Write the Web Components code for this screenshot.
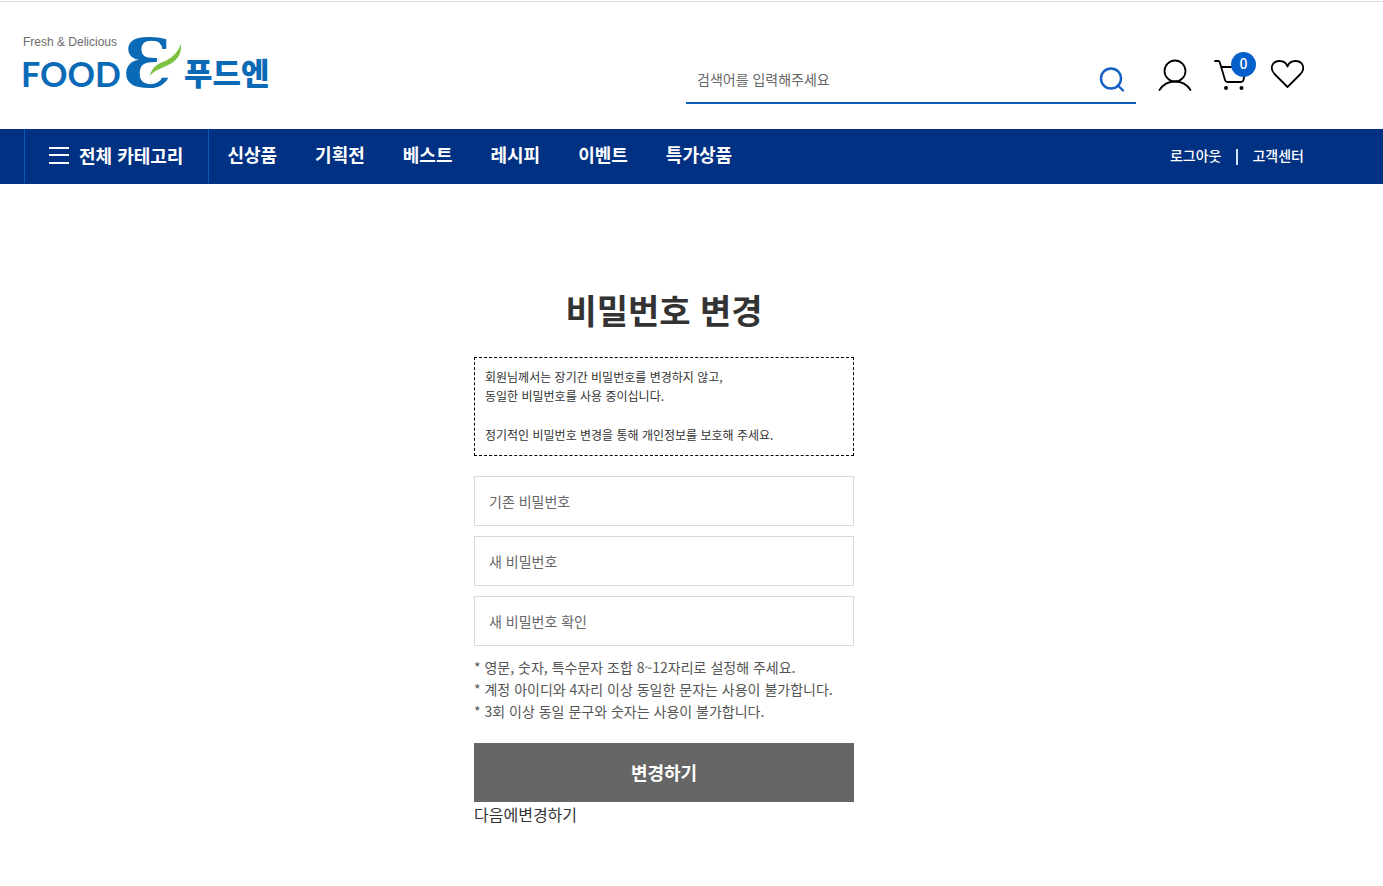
<!DOCTYPE html>
<html lang="ko">
<head>
  <meta charset="utf-8">
  <meta name="viewport" content="width=device-width, initial-scale=1">
  <title>비밀번호 변경</title>
  <style>
    body {
      margin: 0;
      background: #fff;
      color: #333;
      font-family: "Noto Sans CJK KR", "Noto Sans", sans-serif;
      font-size: 14px;
      --blue: #0d5bb8;
      --navy: #003182;
      --side-left: 24px;
      --side-right: 79px;
    }
  </style>
</head>
<body>

  <site-header></site-header>

  <site-nav>
    <a href="#new">신상품</a>
    <a href="#plan">기획전</a>
    <a href="#best">베스트</a>
    <a href="#recipe">레시피</a>
    <a href="#event">이벤트</a>
    <a href="#special">특가상품</a>
    <a slot="util" href="#logout">로그아웃</a>
    <a slot="util" href="#cs">고객센터</a>
  </site-nav>

  <password-page>
    <notice-box>
      <p>회원님께서는 장기간 비밀번호를 변경하지 않고,<br>동일한 비밀번호를 사용 중이십니다.</p>
      <p>정기적인 비밀번호 변경을 통해 개인정보를 보호해 주세요.</p>
    </notice-box>
    <password-field name="old" label="기존 비밀번호"></password-field>
    <password-field name="new" label="새 비밀번호"></password-field>
    <password-field name="confirm" label="새 비밀번호 확인"></password-field>
  </password-page>

  <script>
    class SiteLogo extends HTMLElement {
      constructor() {
        super();
        this.attachShadow({ mode: 'open' });
      }

      connectedCallback() {
        this.shadowRoot.innerHTML = `
          <style>
            :host {
              display: block;
            }

            a, svg {
              display: block;
            }

            svg {
              overflow: visible;
            }

            .blue {
              fill: #0a6ab6;
            }

            .slogan {
              font: 12px "Liberation Sans", sans-serif;
              fill: #6b6b6b;
            }

            .food {
              font: bold 34px Lato, sans-serif;
            }

            .amp {
              font: bold 68px "DejaVu Serif", serif;
            }

            .kor {
              font: 900 31px "Noto Sans CJK KR", sans-serif;
            }
          </style>
          <a href="#home" aria-label="푸드엔">
            <svg width="250" height="60" viewBox="0 0 250 60">
              <text class="slogan" x="-1" y="13">Fresh &amp; Delicious</text>
              <text class="blue food" x="-3" y="54">FOOD</text>
              <text class="blue amp" x="99" y="54">Ɛ</text>
              <path d="M125 44C127 35 132 31 140 28C149 24 154 19 157 9C159 19 155 26 147 31C138 36 131 37 125 44Z" fill="#7cc142" stroke="#fff" stroke-width="1"/>
              <text class="blue kor" x="160" y="52">푸드엔</text>
            </svg>
          </a>
        `;
      }
    }

    class SiteHeader extends HTMLElement {
      constructor() {
        super();
        this.attachShadow({ mode: 'open' });
      }

      connectedCallback() {
        this.shadowRoot.innerHTML = `
          <style>
            :host {
              display: block;
              margin-top: 1px;
              border-top: 1px solid #ddd;
            }

            .inner {
              display: flex;
              align-items: flex-start;
              height: 127px;
              box-sizing: border-box;
              padding: 31px var(--side-right) 0 var(--side-left);
            }

            .search {
              display: flex;
              align-items: center;
              flex: 0 1 450px;
              height: 48px;
              box-sizing: border-box;
              margin: 23px 22px 0 auto;
              border-bottom: 2px solid var(--blue);
            }

            .search input {
              flex: 1;
              min-width: 0;
              padding: 0 11px;
              border: 0;
              outline: 0;
              background: none;
              font: inherit;
              color: #333;
            }

            .search input::placeholder {
              color: #666;
              opacity: 1;
            }

            button {
              padding: 0 11px 0 0;
              border: 0;
              background: none;
              cursor: pointer;
            }

            svg {
              display: block;
              fill: none;
              stroke: #000;
              stroke-width: 1.8;
              stroke-linecap: round;
              stroke-linejoin: round;
            }

            .search svg {
              stroke: #1560c4;
              stroke-width: 2.4;
            }

            .icons {
              display: flex;
              gap: 22px;
              margin-top: 24px;
            }

            .icons a {
              position: relative;
            }

            .count {
              position: absolute;
              top: -5px;
              right: -8px;
              width: 25px;
              height: 25px;
              border-radius: 50%;
              background: #0660cc;
              color: #fff;
              font-weight: 500;
              line-height: 23px;
              text-align: center;
            }
          </style>
          <div class="inner">
            <site-logo></site-logo>
            <form class="search">
              <input type="text" placeholder="검색어를 입력해주세요" aria-label="검색어">
              <button type="button" aria-label="검색">
                <svg width="26" height="26" viewBox="0 0 26 26">
                  <circle cx="12" cy="12.5" r="10"/>
                  <path d="M19 19.5L24 24.5"/>
                </svg>
              </button>
            </form>
            <div class="icons">
              <a href="#my" aria-label="마이페이지">
                <svg width="34" height="36" viewBox="0 0 34 36">
                  <circle cx="17" cy="14" r="10.5"/>
                  <path d="M1.500 33C5 27.500 10 24.500 17 24.500S29 27.500 32.500 33"/>
                </svg>
              </a>
              <a href="#cart" aria-label="장바구니">
                <svg width="34" height="36" viewBox="0 0 34 36">
                  <path d="M1 4H4.500Q5.500 4 6 6L11 23Q11.500 25 13.500 25H27Q29 25 29.500 23L32 10H7"/>
                  <circle cx="12" cy="31" r="2" fill="#000" stroke="none"/>
                  <circle cx="27.500" cy="31" r="2" fill="#000" stroke="none"/>
                </svg>
                <span class="count">0</span>
              </a>
              <a href="#wish" aria-label="찜">
                <svg width="34" height="36" viewBox="0 0 34 36">
                  <path d="M17.500 30L4.500 17C-1 11 2.500 4 9.500 4C13.500 4 16.500 6.500 17.500 9.500C18.500 6.500 21.500 4 25.500 4C32.500 4 36 11 30.500 17Z"/>
                </svg>
              </a>
            </div>
          </div>
        `;
      }
    }

    class SiteNav extends HTMLElement {
      constructor() {
        super();
        this.attachShadow({ mode: 'open' });
      }

      connectedCallback() {
        this.shadowRoot.innerHTML = `
          <style>
            :host {
              display: block;
              background: var(--navy);
              color: #fff;
            }

            nav {
              display: flex;
              align-items: center;
              height: 55px;
              padding: 0 var(--side-right) 0 var(--side-left);
            }

            .all {
              display: flex;
              align-items: center;
              gap: 10px;
              height: 54px;
              align-self: flex-start;
              padding: 0 25px 2px 24px;
              border: solid #0e58b4;
              border-width: 0 1px;
              background: none;
              color: #fff;
              font: bold 18px "Noto Sans CJK KR", sans-serif;
              cursor: pointer;
            }

            .bars {
              box-sizing: border-box;
              width: 20px;
              height: 17px;
              border: solid #fff;
              border-width: 2px 0;
              background: linear-gradient(#fff, #fff) center / 100% 2px no-repeat;
            }

            .menu {
              display: flex;
              gap: 38px;
              padding-left: 18px;
              font-size: 18px;
              font-weight: bold;
              line-height: 50px;
              align-self: flex-start;
            }

            .util {
              display: flex;
              gap: 31px;
              margin-left: auto;
              padding-bottom: 3px;
              font-weight: 500;
              position: relative;
            }

            .util::before {
              content: "";
              position: absolute;
              top: 4px;
              left: 50%;
              width: 2px;
              height: 16px;
              margin-left: -1px;
              background: #cfe4ff;
            }

            ::slotted(a) {
              color: inherit;
              text-decoration: none;
              white-space: nowrap;
            }
          </style>
          <nav>
            <button class="all" type="button"><span class="bars"></span>전체 카테고리</button>
            <div class="menu"><slot></slot></div>
            <div class="util"><slot name="util"></slot></div>
          </nav>
        `;
      }
    }

    class NoticeBox extends HTMLElement {
      constructor() {
        super();
        this.attachShadow({ mode: 'open' });
      }

      connectedCallback() {
        this.shadowRoot.innerHTML = `
          <style>
            :host {
              display: flex;
              flex-direction: column;
              gap: 20px;
              margin-bottom: 10px;
              padding: 9px 10px 11px;
              border: 1px dashed #000;
              font-size: 12px;
              line-height: 19px;
            }

            ::slotted(p) {
              margin: 0;
            }
          </style>
          <slot></slot>
        `;
      }
    }

    class PasswordField extends HTMLElement {
      constructor() {
        super();
        this.attachShadow({ mode: 'open' });
      }

      connectedCallback() {
        const label = this.getAttribute('label');
        const name = this.getAttribute('name');

        this.shadowRoot.innerHTML = `
          <style>
            :host {
              display: block;
            }

            input {
              display: block;
              width: 100%;
              height: 50px;
              box-sizing: border-box;
              padding: 0 14px;
              border: 1px solid #d9d9d9;
              font: inherit;
              color: #333;
            }

            input::placeholder {
              color: #666;
              opacity: 1;
            }
          </style>
          <input type="password" name="${name}" placeholder="${label}" aria-label="${label}">
        `;
      }
    }

    class PasswordPage extends HTMLElement {
      constructor() {
        super();
        this.attachShadow({ mode: 'open' });
      }

      connectedCallback() {
        this.shadowRoot.innerHTML = `
          <style>
            :host {
              display: block;
              padding: 101px var(--side-right) 60px var(--side-left);
            }

            main {
              max-width: 380px;
              margin: 0 auto;
            }

            h1 {
              margin: 0 0 22px;
              font-size: 34px;
              font-weight: bold;
              line-height: 50px;
              text-align: center;
            }

            form {
              display: flex;
              flex-direction: column;
              gap: 10px;
            }

            ul {
              margin: 0 0 11px;
              padding: 0;
              list-style: none;
              color: #555;
              line-height: 22px;
            }

            button {
              height: 59px;
              padding: 0 0 2px;
              border: 0;
              background: #666;
              color: #fff;
              font: bold 18px "Noto Sans CJK KR", sans-serif;
              cursor: pointer;
            }

            .later {
              color: #333;
              font-size: 16px;
              line-height: 24px;
              text-decoration: none;
            }
          </style>
          <main>
            <h1>비밀번호 변경</h1>
            <form>
              <slot></slot>
              <ul>
                <li>* 영문, 숫자, 특수문자 조합 8~12자리로 설정해 주세요.</li>
                <li>* 계정 아이디와 4자리 이상 동일한 문자는 사용이 불가합니다.</li>
                <li>* 3회 이상 동일 문구와 숫자는 사용이 불가합니다.</li>
              </ul>
              <button type="button">변경하기</button>
            </form>
            <a class="later" href="#later">다음에변경하기</a>
          </main>
        `;
      }
    }

    customElements.define('site-logo', SiteLogo);
    customElements.define('site-header', SiteHeader);
    customElements.define('site-nav', SiteNav);
    customElements.define('notice-box', NoticeBox);
    customElements.define('password-field', PasswordField);
    customElements.define('password-page', PasswordPage);
  </script>
</body>
</html>
